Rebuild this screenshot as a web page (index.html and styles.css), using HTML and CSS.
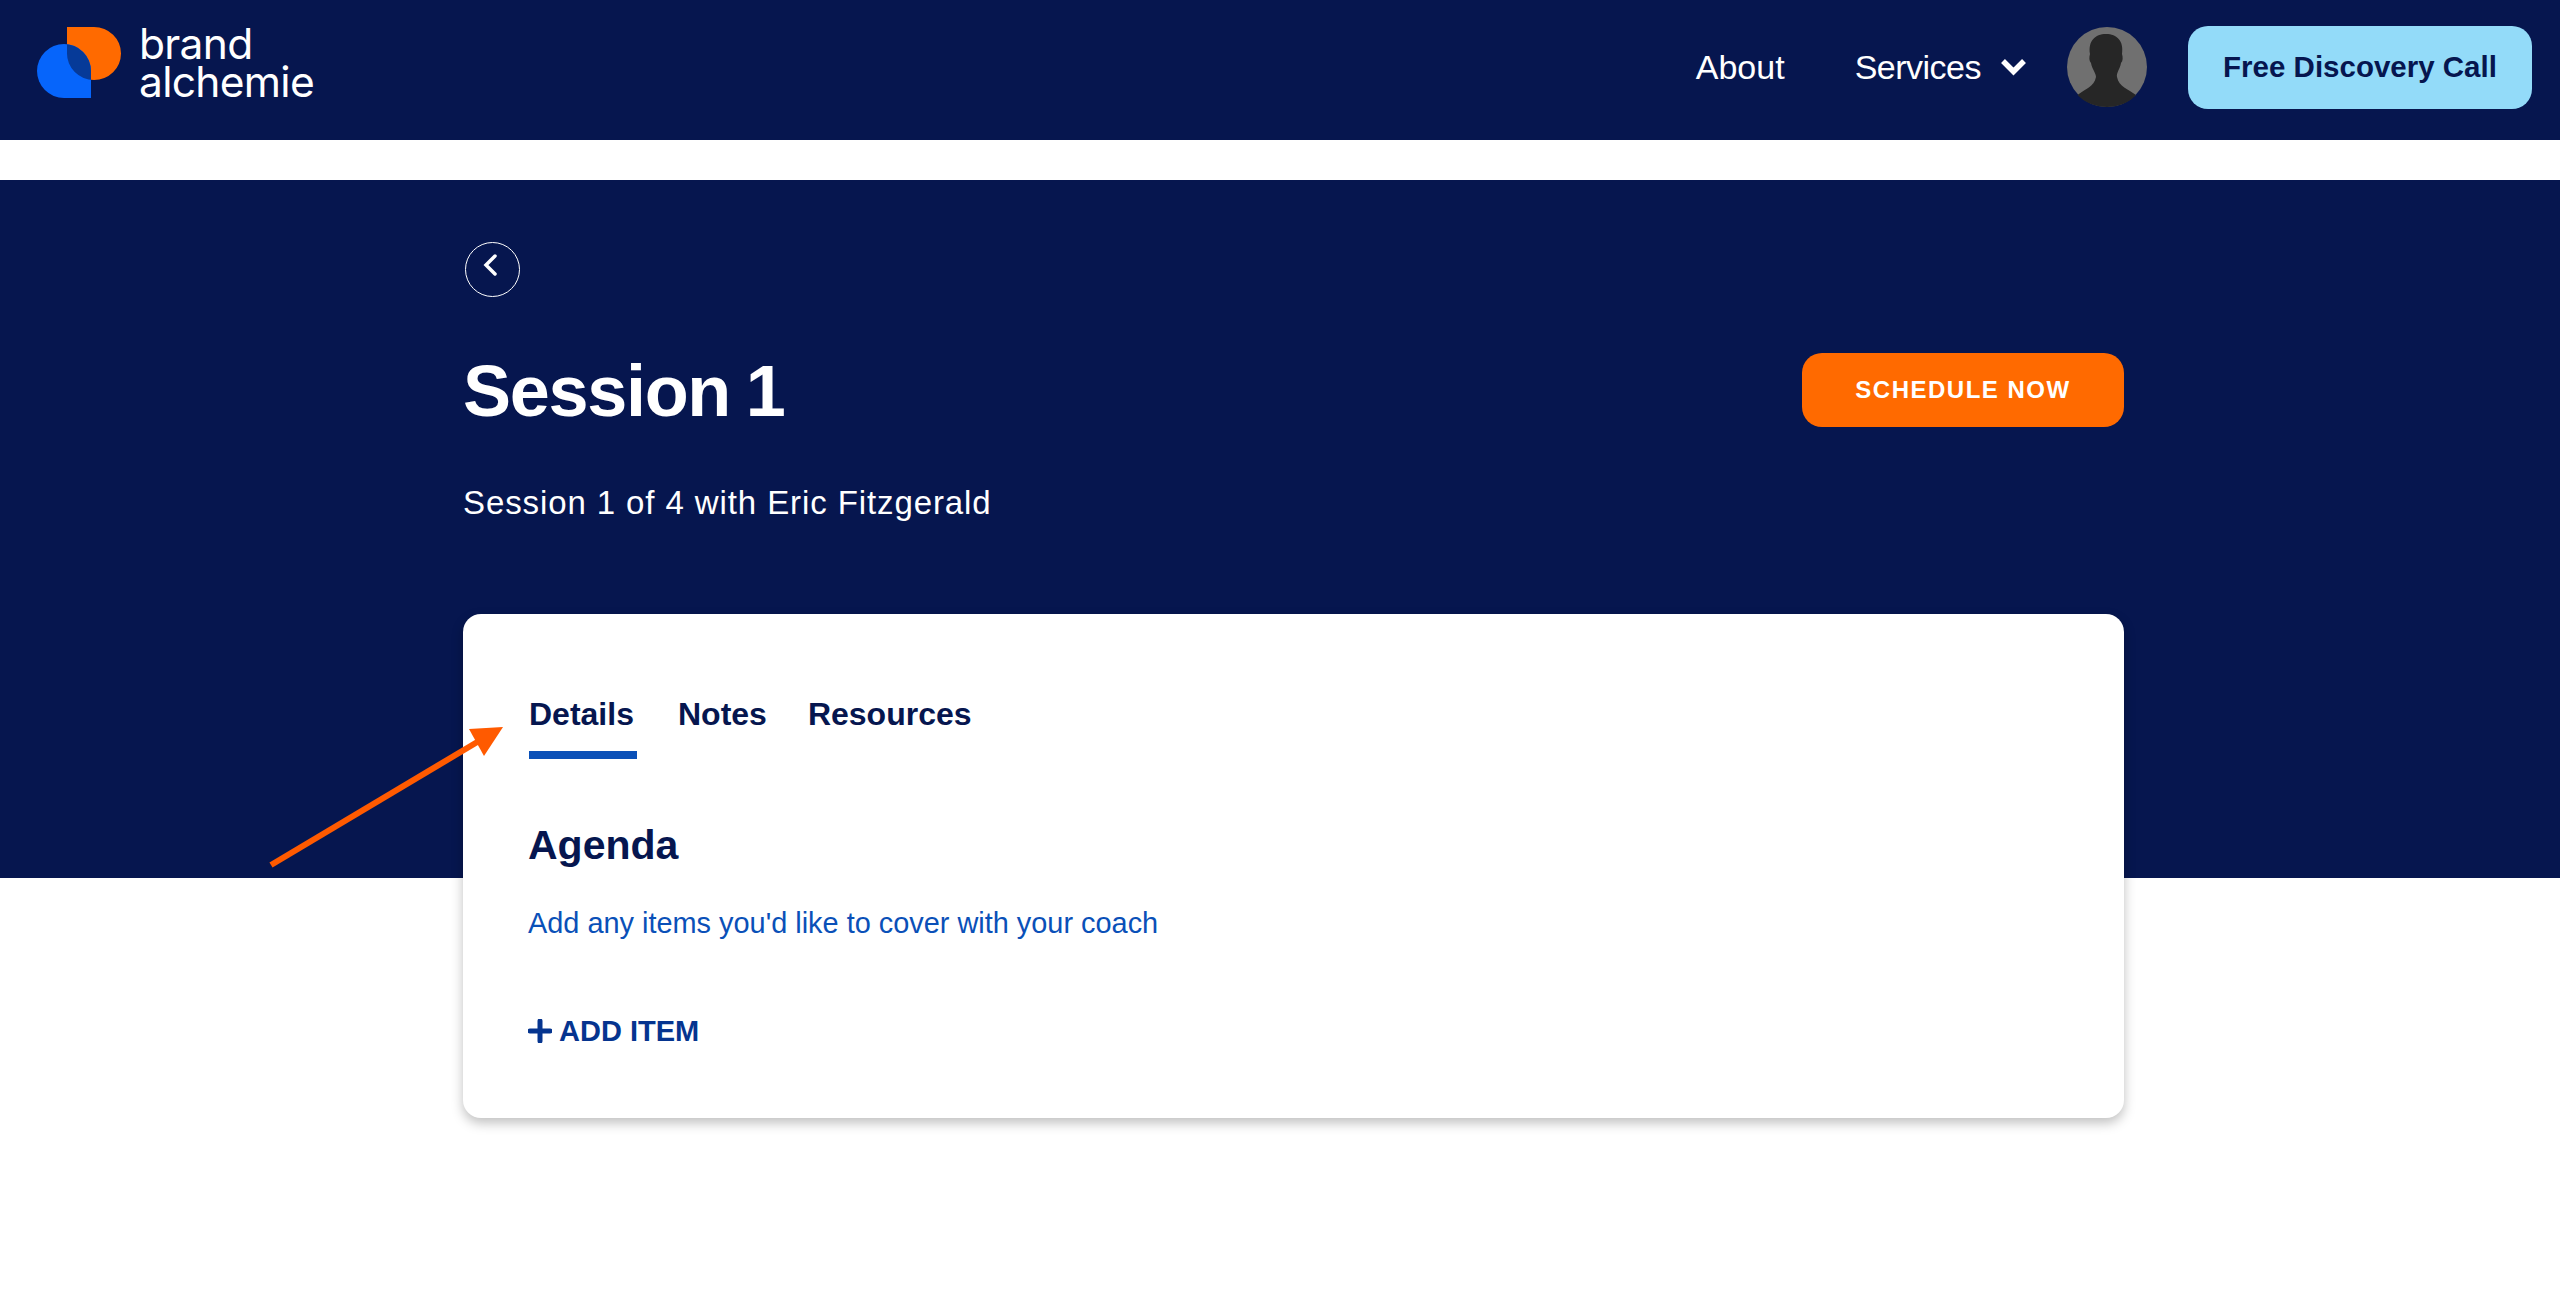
FILE: index.html
```html
<!DOCTYPE html>
<html lang="en">
<head>
  <meta charset="UTF-8" />
  <title>Session 1</title>
  <link rel="stylesheet" href="styles.css">
</head>
<body>
  <header class="topbar">
    <a class="logo" href="#">
      <svg class="logo-mark" viewBox="0 0 84 71" width="84" height="71">
        <defs>
          <clipPath id="clipNaranja"><path d="M30 0H57A27 26.500 0 0 1 57 53A27 26.500 0 0 1 30 26Z"/></clipPath>
        </defs>
        <path fill="#ff6a00" d="M30 0H57A27 26.500 0 0 1 57 53A27 26.500 0 0 1 30 26Z"/>
        <path fill="#0665fb" d="M54 71H27A27 27 0 0 1 27 17A27 27 0 0 1 54 44Z"/>
        <path fill="#063a98" clip-path="url(#clipNaranja)" d="M54 71H27A27 27 0 0 1 27 17A27 27 0 0 1 54 44Z"/>
      </svg>
      <span class="logo-text">brand<br>alchemie</span>
    </a>
    <nav class="menu">
      <a href="#">About</a>
      <a class="menu-services" href="#"><span class="services-label">Services</span>
        <svg viewBox="0 0 27 18" width="27" height="18"><path d="M3 3l10.500 10.500L24 3" fill="none" stroke="#fff" stroke-width="5.500"/></svg>
      </a>
      <svg class="avatar" viewBox="0 0 80 80" width="80" height="80">
        <circle cx="40" cy="40" r="40" fill="#707070"/>
        <path fill="#262626" d="M10.500 68C18 62 27 60 29 50C29 46 25 42 24 36C22 34 22 30 23 27C21 14 28 7 39 7C50 7 57 14 55 27C56 30 56 34 54 36C53 42 49 46 50 50C52 60 61 62 69 68C62 76 51 80 40 80C29 80 18 76 10.500 68Z"/>
      </svg>
      <a class="btn-call" href="#">Free Discovery Call</a>
    </nav>
  </header>

  <section class="hero">
    <a class="btn-back" href="#">
      <svg viewBox="0 0 20 24" width="20" height="24"><path d="M15 3L6 12l9 9" fill="none" stroke="#fff" stroke-width="3.500" stroke-linecap="round"/></svg>
    </a>
    <div class="hero-row">
      <h1>Session 1</h1>
      <a class="btn-schedule" href="#">SCHEDULE NOW</a>
    </div>
    <p class="hero-sub">Session 1 of 4 with Eric Fitzgerald</p>

    <div class="card">
      <div class="tabs">
        <a class="tab activo" href="#">Details</a>
        <a class="tab" href="#">Notes</a>
        <a class="tab" href="#">Resources</a>
      </div>
      <h2>Agenda</h2>
      <p class="agenda-hint">Add any items you'd like to cover with your coach</p>
      <a class="add-item" href="#">
        <svg viewBox="0 0 24 24" width="24" height="24"><path d="M12 2v20M2 12h20" fill="none" stroke="#05348f" stroke-width="5" stroke-linecap="round"/></svg>
        ADD ITEM
      </a>
    </div>
  </section>

  <svg class="arrow" viewBox="0 0 250 150" width="250" height="150">
    <path d="M3 140L216 13" fill="none" stroke="#ff5a00" stroke-width="6"/>
    <path fill="#ff5a00" d="M201 4L235 2L216 31Z"/>
  </svg>
</body>
</html>
```

FILE: styles.css
```css
body { margin: 0; background: #fff; font-family: "Liberation Sans", Arial, sans-serif; color: #06164f; min-height: 1298px; position: relative; overflow: hidden; }
a { text-decoration: none; color: inherit; }

.topbar { height: 140px; box-sizing: border-box; background: #06164f; display: flex; align-items: center; justify-content: space-between; padding: 0 28px 6px 37px; }
.logo { display: flex; align-items: center; gap: 18px; color: #fff; margin-bottom: 9px; }
.logo-mark { display: block; }
.logo-text { font-family: Inter, sans-serif; font-weight: 400; font-size: 42.500px; line-height: 38px; letter-spacing: -0.700px; }
.menu { display: flex; align-items: center; color: #fff; font-size: 34px; }
.menu > a:first-child { margin-right: 70px; }
.menu-services { display: flex; align-items: center; gap: 19px; margin-right: 40px; }
.services-label { letter-spacing: -0.500px; }
.avatar { display: block; margin-right: 41px; }
.btn-call { width: 344px; height: 83px; box-sizing: border-box; display: flex; align-items: center; justify-content: center; background: #93dbf9; color: #06164f; border-radius: 20px; font-size: 29.500px; font-weight: bold; }

.hero { margin-top: 40px; height: 636px; padding: 62px 436px 0 463px; background: #06164f; color: #fff; }
.btn-back { width: 55px; height: 55px; margin-left: 2px; box-sizing: border-box; border: 1.500px solid #fff; border-radius: 50%; display: flex; align-items: center; justify-content: center; }
.btn-back svg { margin: 0 6px 9px 0; }
.hero-row { display: flex; align-items: center; justify-content: space-between; margin-top: 56px; height: 74px; }
h1 { margin: 2px 0 0; font-size: 72px; line-height: 74px; font-weight: bold; letter-spacing: -1.300px; word-spacing: -3px; }
.btn-schedule { width: 322px; height: 74px; display: flex; align-items: center; justify-content: center; background: #ff6a00; border-radius: 20px; color: #fff; font-size: 24px; font-weight: bold; letter-spacing: 1.500px; }
.hero-sub { margin: 56px 0 0; font-size: 33px; line-height: 40px; letter-spacing: 0.900px; }

.card { margin-top: 91px; height: 504px; box-sizing: border-box; padding: 76px 64px 0 65px; background: #fff; color: #06164f; border-radius: 18px; box-shadow: 0 5px 12px rgba(0,0,0,0.25); }
.tabs { display: flex; gap: 41px; margin-left: 1px; }
.tab { height: 69px; padding-top: 4px; box-sizing: border-box; font-size: 32px; line-height: 40px; font-weight: bold; }
.tab.activo { min-width: 108px; border-bottom: 8px solid #0a50b8; }
h2 { margin: 61px 0 0; font-size: 41px; line-height: 50px; font-weight: bold; }
.agenda-hint { margin: 35px 0 0; font-size: 28.900px; line-height: 36px; color: #0a50b8; }
.add-item { display: flex; align-items: center; gap: 7px; margin-top: 72px; font-size: 29px; line-height: 36px; font-weight: bold; color: #05348f; }

.arrow { position: absolute; left: 268px; top: 725px; }
```
